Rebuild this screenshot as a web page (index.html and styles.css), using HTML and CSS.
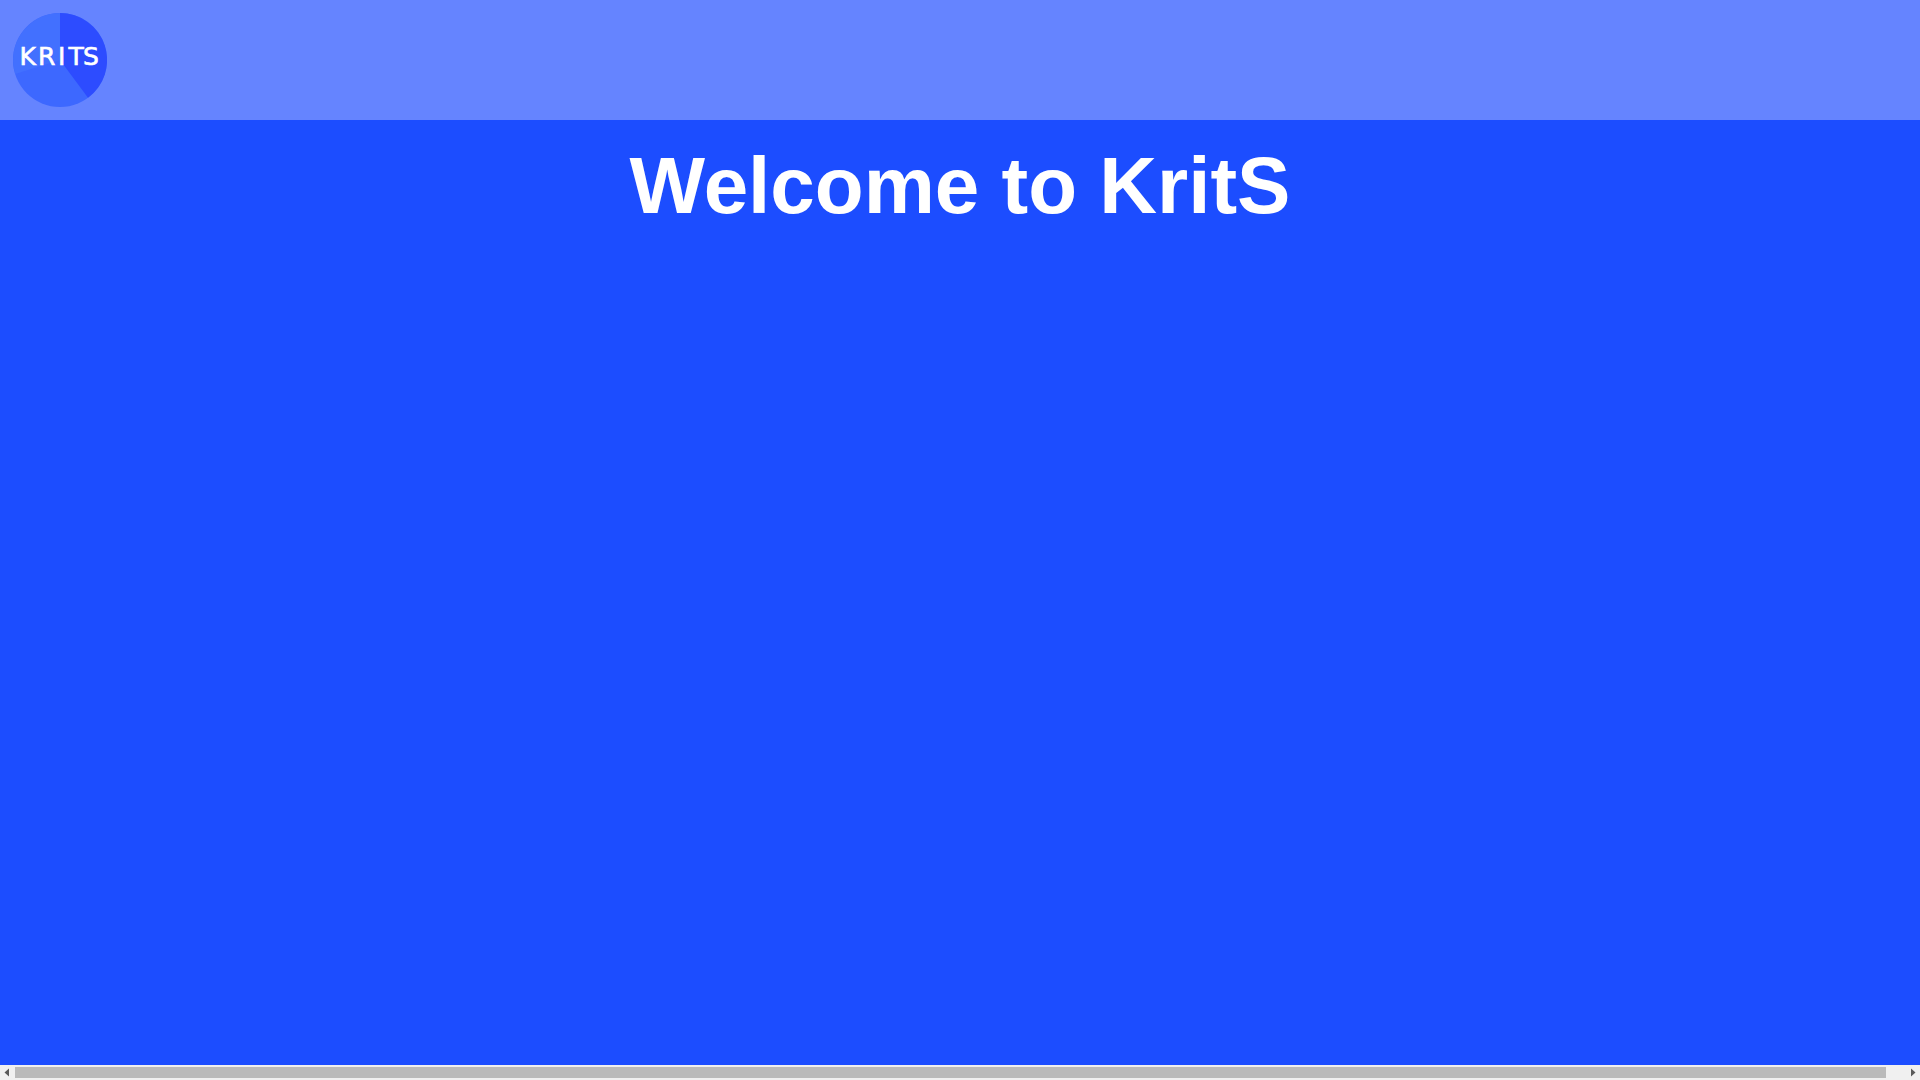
FILE: index.html
```html
<!DOCTYPE html>
<html lang="en">

<head>
    <meta charset="UTF-8">
    <meta name="viewport" content="width=device-width, initial-scale=1.0">
    <title>KritS</title>

    <link rel="stylesheet" href="styles.css">
</head>

<body>
    <header class="topBar">
        <svg class="logo" viewBox="0 0 94 94" width="94" height="94" aria-label="KritS logo">
            <circle cx="47" cy="47" r="47" fill="#3d68ff" />
            <path d="M47 47 L47 0 A47 47 0 0 1 75 84.8 Z" fill="#2d4cff" />
            <path d="M47 47 L47 0 A47 47 0 0 0 2.2 61 Z" fill="#4270ff" />
            <text class="logoText" x="6.5 25 45 55.5 70" y="52">KRITS</text>
        </svg>
    </header>

    <main class="content">
        <h1 class="welcome">Welcome to KritS</h1>
    </main>

    <div class="scrollBar">
        <svg class="scrollArrow" viewBox="0 0 15 15" width="15" height="15">
            <polygon points="4.5,7.5 9,3.5 9,11.5" fill="#5a5a5a" />
        </svg>
        <div class="scrollThumb"></div>
        <svg class="scrollArrow" viewBox="0 0 15 15" width="15" height="15">
            <polygon points="10.5,7.5 6,3.5 6,11.5" fill="#5a5a5a" />
        </svg>
    </div>
</body>

</html>
```

FILE: styles.css
```css
html,
body {
    margin: 0;
    padding: 0;
    height: 100%;
}

body {
    display: flex;
    flex-direction: column;
    font-family: 'Liberation Sans', Arial, sans-serif;
    background-color: #1c4dff;
    overflow: hidden;
}

.topBar {
    display: flex;
    align-items: center;
    flex-shrink: 0;
    height: 120px;
    padding-left: 13px;
    background-color: #6584ff;
}

.logoText {
    font-family: 'DejaVu Sans', sans-serif;
    font-size: 25px;
    fill: #fff;
    stroke: #fff;
    stroke-width: 0.6px;
}

.content {
    flex: 1;
}

.welcome {
    margin: 0;
    padding-top: 20px;
    font-size: 80px;
    line-height: 92px;
    text-align: center;
    color: #fff;
}

.scrollBar {
    display: flex;
    align-items: center;
    flex-shrink: 0;
    height: 15px;
    background-color: #f0f0f0;
}

.scrollArrow {
    flex-shrink: 0;
}

.scrollThumb {
    width: 1871px;
    height: 11px;
    background-color: #bababa;
}

.scrollThumb + .scrollArrow {
    margin-left: auto;
}
```
